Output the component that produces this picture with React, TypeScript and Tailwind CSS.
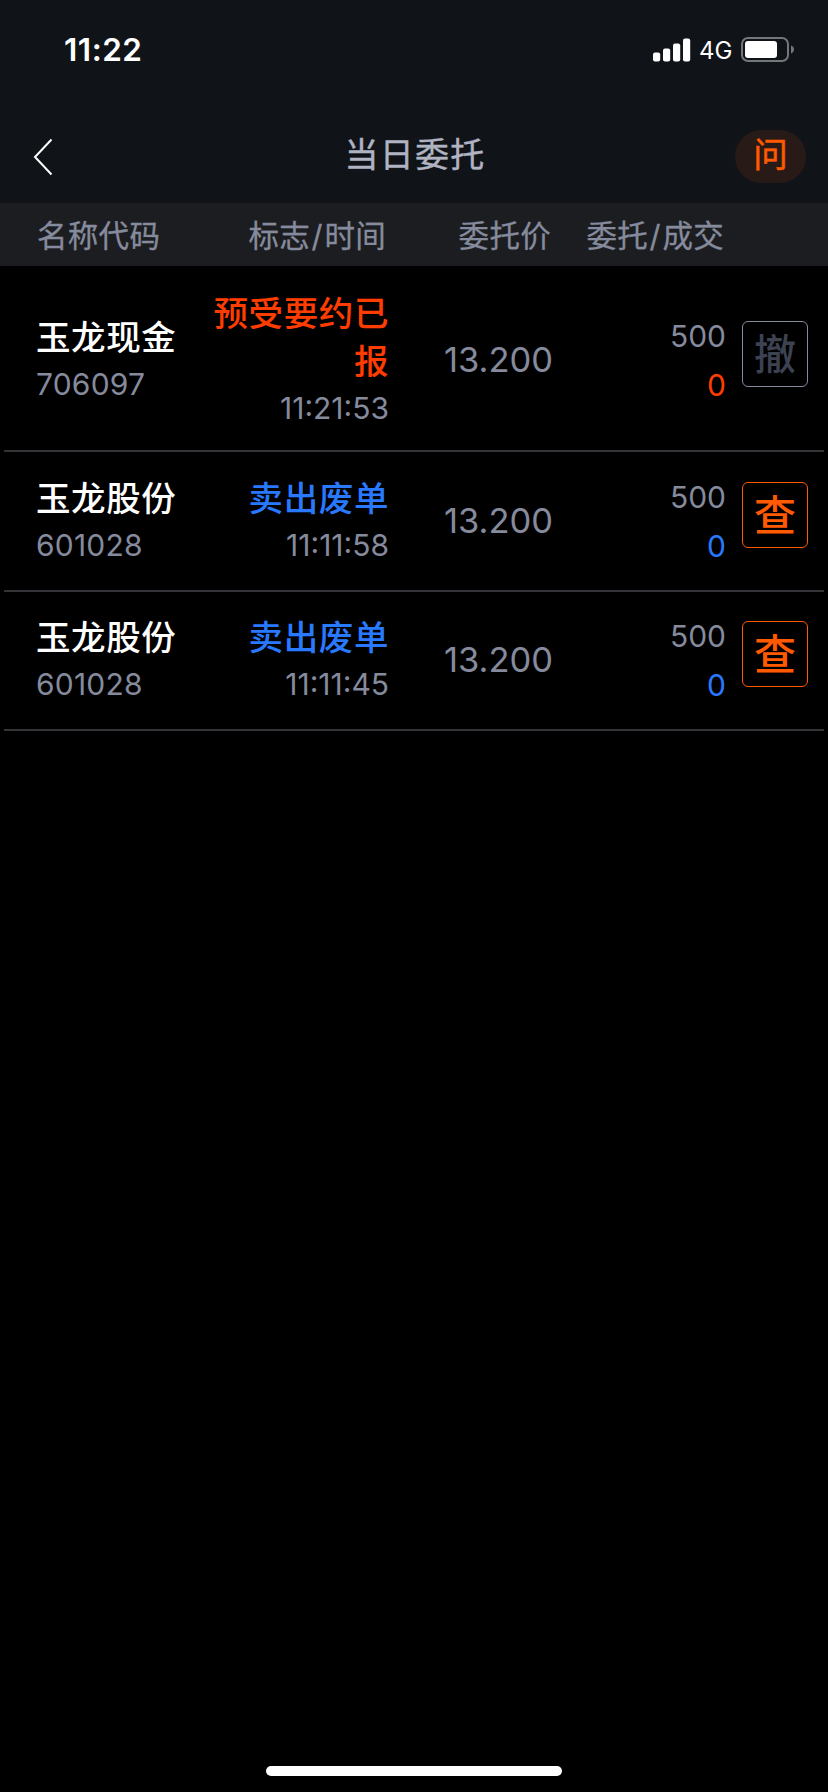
import React from "react";
import clsx from "clsx";

interface Order {
  id: number;
  name: string;
  code: string;
  status: string;
  time: string;
  price: string;
  amount: number;
  filled: number;
  side: "buy" | "sell";
  action: string;
  rowClass: string;
}

const orders: Order[] = [
  {
    id: 1,
    name: "玉龙现金",
    code: "706097",
    status: "预受要约已报",
    time: "11:21:53",
    price: "13.200",
    amount: 500,
    filled: 0,
    side: "buy",
    action: "撤",
    rowClass: "h-[186px] pt-1",
  },
  {
    id: 2,
    name: "玉龙股份",
    code: "601028",
    status: "卖出废单",
    time: "11:11:58",
    price: "13.200",
    amount: 500,
    filled: 0,
    side: "sell",
    action: "查",
    rowClass: "h-[140px]",
  },
  {
    id: 3,
    name: "玉龙股份",
    code: "601028",
    status: "卖出废单",
    time: "11:11:45",
    price: "13.200",
    amount: 500,
    filled: 0,
    side: "sell",
    action: "查",
    rowClass: "h-[139px] pb-px",
  },
];

const StatusBar: React.FC = () => (
  <div className="flex h-[100px] items-center pl-[64px] pr-[33px]">
    <span className="text-[31.5px] font-semibold leading-none tracking-[0.5px] text-white">
      11:22
    </span>
    <svg className="ml-auto" width="38" height="24" viewBox="0 0 38 24" fill="#fff">
      <rect x="0" y="14.5" width="7.2" height="9" rx="2" />
      <rect x="10" y="10.5" width="7.2" height="13" rx="2" />
      <rect x="20" y="5.5" width="7.2" height="18" rx="2" />
      <rect x="30" y="0.5" width="7.2" height="23" rx="2" />
    </svg>
    <span className="ml-[8px] w-[34px] pt-[2px] text-[24px] leading-none text-white">4G</span>
    <svg className="ml-[8px]" width="54" height="26" viewBox="0 0 54 26">
      <rect x="1" y="1" width="46" height="23" rx="6" fill="none" stroke="#74777a" strokeWidth="2" />
      <rect x="4" y="4" width="32" height="17" rx="3" fill="#fff" />
      <path d="M50 8.5c2 .8 3 2.200 3 4s-1 3.200-3 4z" fill="#74777a" />
    </svg>
  </div>
);

const NavBar: React.FC = () => (
  <div className="grid h-[103px] grid-cols-[1fr_auto_1fr] items-center px-[22px]">
    <svg className="ml-[11px] mt-[10px]" width="20" height="38" viewBox="0 0 20 38" fill="none">
      <path d="M18.500 1.500 2 19l16.500 17.500" stroke="#fff" strokeWidth="2" />
    </svg>
    <h1 className="pl-[2px] pt-[6px] text-[34px] leading-none tracking-[1.2px] text-[#b0b4c2] [-webkit-text-stroke:0.4px]">
      当日委托
    </h1>
    <button className="mt-[10px] flex h-[53px] w-[71px] items-center justify-center justify-self-end rounded-full bg-[#281b17] pb-[2px] text-[34.500px] leading-none text-[#ff5a00] [-webkit-text-stroke:0.5px]">
      问
    </button>
  </div>
);

const TableHeader: React.FC = () => (
  <div className="grid h-[63px] grid-cols-[164px_185px_165px_173px] items-center bg-[#1c1d20] pl-[37px] pt-[3px] text-[30.500px] leading-none tracking-[0.3px] text-[#858b9d] [-webkit-text-stroke:0.3px]">
    <span>名称代码</span>
    <span className="text-right">
      标志<span className="mx-[1.5px]">/</span>时间
    </span>
    <span className="text-right">委托价</span>
    <span className="text-right">
      委托<span className="mx-[1.5px]">/</span>成交
    </span>
  </div>
);

const OrderRow: React.FC<{ order: Order }> = ({ order }) => {
  const sideColor = order.side === "buy" ? "text-[#ff3d00]" : "text-[#2979ff]";
  const canQuery = order.action === "查";

  return (
    <div
      className={clsx(
        "mx-1 grid grid-cols-[164px_189px_164px_173px_66px] items-center border-b-2 border-[#333438] pl-[32px] text-[#858b9d]",
        order.rowClass
      )}
    >
      <div className="py-0.5">
        <p className="text-[34.500px] font-medium leading-[48px] tracking-[0.6px] text-white">
          {order.name}
        </p>
        <p className="text-[30px] leading-[44px] tracking-[0.2px]">{order.code}</p>
      </div>
      <div className="py-0.5 text-right">
        <p className={clsx("text-[34.500px] font-medium leading-[48px] tracking-[0.6px]", sideColor)}>
          {order.status}
        </p>
        <p className="text-[30px] leading-[44px]">{order.time}</p>
      </div>
      <p className="text-right text-[34.500px] leading-none">{order.price}</p>
      <div className="pt-0.5 text-right text-[30px] leading-[49px]">
        <p>{order.amount}</p>
        <p className={sideColor}>{order.filled}</p>
      </div>
      <button
        className={clsx(
          "-mt-3 ml-4 flex size-[66px] items-center justify-center rounded-md border pt-px text-[42px] font-medium leading-none",
          canQuery ? "border-[#ff5a00] text-[#ff5a00]" : "border-[#858b9d] text-[#3c4252]"
        )}
      >
        {order.action}
      </button>
    </div>
  );
};

const App: React.FC = () => {
  return (
    <div className="flex h-[1792px] w-[828px] flex-col bg-black font-['Inter','Noto_Sans_CJK_SC',sans-serif]">
      <header className="bg-[#101318]">
        <StatusBar />
        <NavBar />
      </header>
      <TableHeader />
      <main className="flex-1">
        {orders.map((order) => (
          <OrderRow key={order.id} order={order} />
        ))}
      </main>
      {/* home indicator */}
      <div className="mx-auto mb-4 h-[10px] w-[296px] rounded-full bg-white" />
    </div>
  );
};

export default App;
